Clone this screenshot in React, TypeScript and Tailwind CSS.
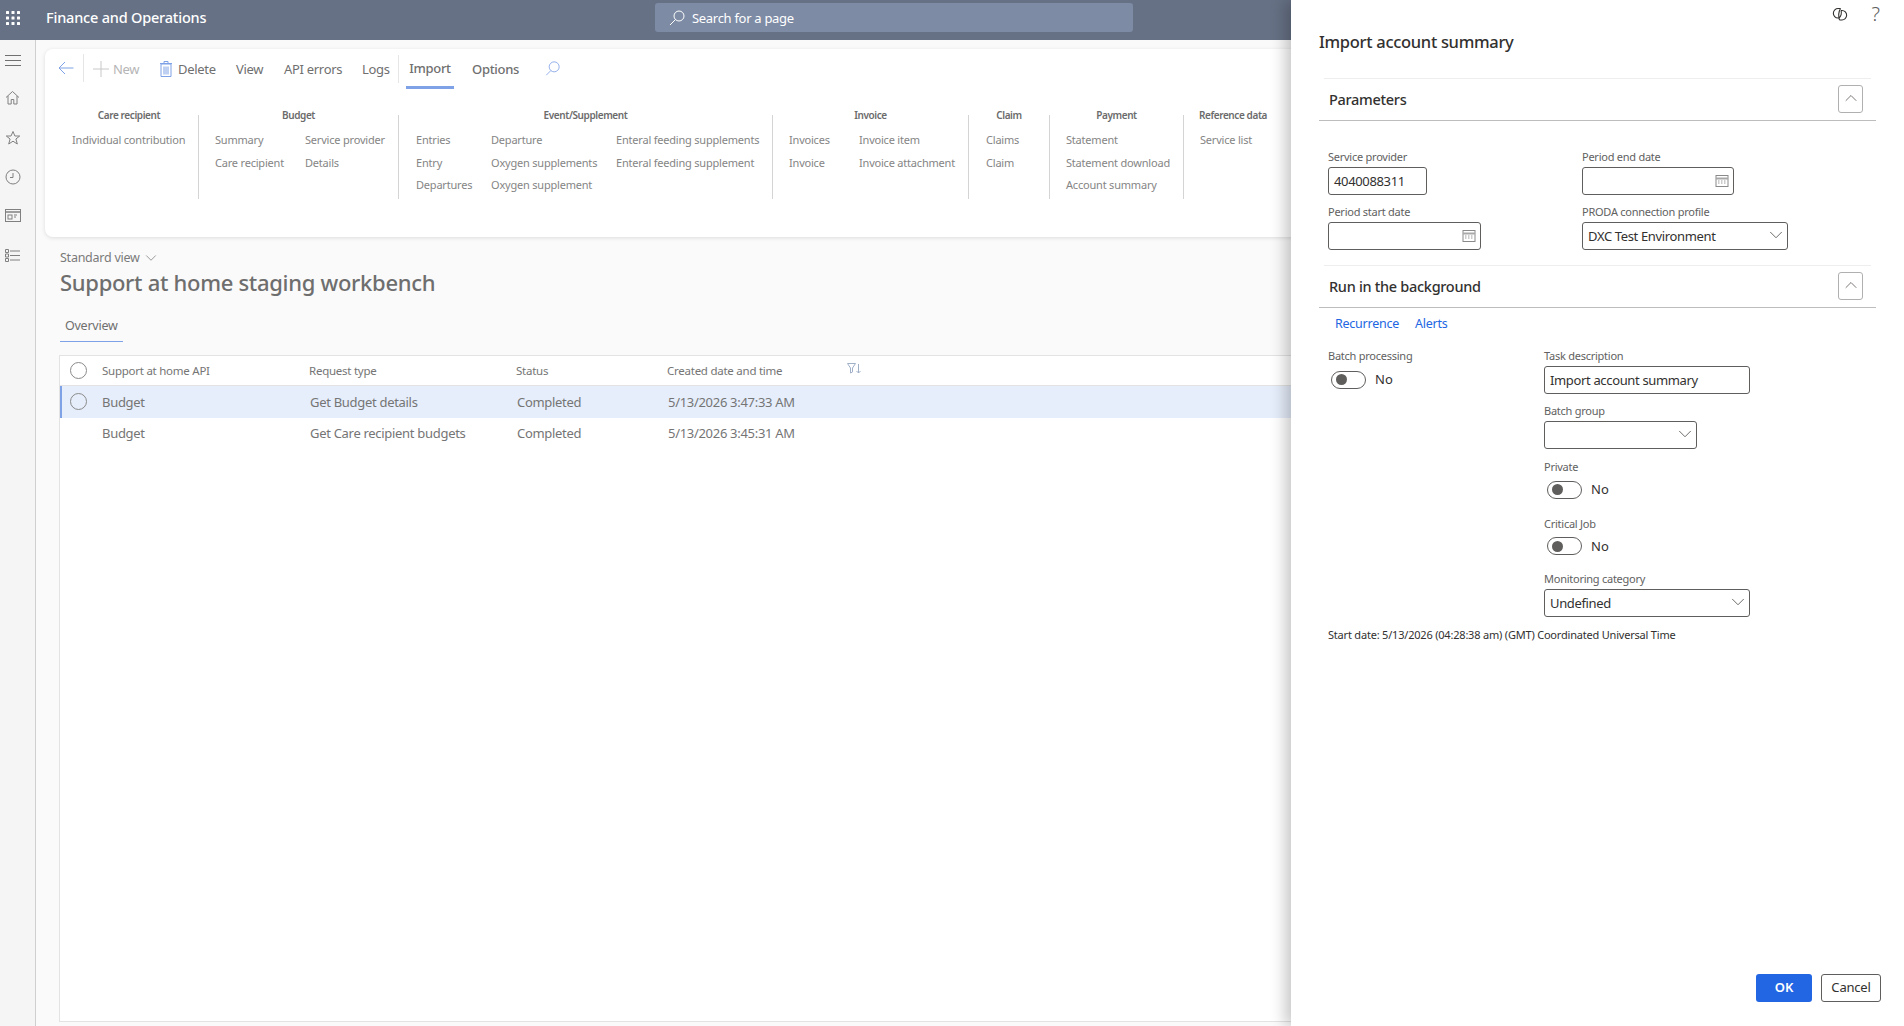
import { ChevronDown, ChevronUp } from 'lucide-react';

const groups = [
  { title: 'Care recipient', width: 'w-[139px]', pad: 'pl-3', columns: [{ w: 'w-[120px]', items: ['Individual contribution'] }] },
  {
    title: 'Budget',
    width: 'w-[200px]',
    pad: 'pl-4',
    columns: [
      { w: 'w-[90px]', items: ['Summary', 'Care recipient'] },
      { w: 'w-[90px]', items: ['Service provider', 'Details'] },
    ],
  },
  {
    title: 'Event/Supplement',
    width: 'w-[374px]',
    pad: 'pl-[17px]',
    columns: [
      { w: 'w-[75px]', items: ['Entries', 'Entry', 'Departures'] },
      { w: 'w-[125px]', items: ['Departure', 'Oxygen supplements', 'Oxygen supplement'] },
      { w: 'w-[150px]', items: ['Enteral feeding supplements', 'Enteral feeding supplement'] },
    ],
  },
  {
    title: 'Invoice',
    width: 'w-[196px]',
    pad: 'pl-4',
    columns: [
      { w: 'w-[70px]', items: ['Invoices', 'Invoice'] },
      { w: 'w-[100px]', items: ['Invoice item', 'Invoice attachment'] },
    ],
  },
  { title: 'Claim', width: 'w-[81px]', pad: 'pl-[17px]', columns: [{ w: 'w-[50px]', items: ['Claims', 'Claim'] }] },
  { title: 'Payment', width: 'w-[134px]', pad: 'pl-4', columns: [{ w: 'w-[110px]', items: ['Statement', 'Statement download', 'Account summary'] }] },
  { title: 'Reference data', width: 'w-[98px]', pad: 'pl-4', columns: [{ w: 'w-[70px]', items: ['Service list'] }], last: true },
];

const rows = [
  { api: 'Budget', type: 'Get Budget details', status: 'Completed', date: '5/13/2026 3:47:33 AM', selected: true },
  { api: 'Budget', type: 'Get Care recipient budgets', status: 'Completed', date: '5/13/2026 3:45:31 AM', selected: false },
];

function CalendarIcon() {
  return (
    <svg className="-mr-px" width="14" height="14" viewBox="0 0 14 14" fill="none" stroke="#8a8a8a" strokeWidth="1">
      <rect x="1" y="1.5" width="12" height="11" />
      <path d="M1 4.5h12" strokeWidth="2" stroke="#a8a8a8" />
      <path d="M3 7h1.5M6 7h1.5M9 7h1.5M3 9h1.5M6 9h1.5M9 9h1.5" stroke="#9a9a9a" />
    </svg>
  );
}

function SelectChevron() {
  return <ChevronDown size={22} strokeWidth={1} className="text-[#605e5c] -mr-[5px] -mt-[2px]" />;
}

function Field({ label, children, className }: { label: string; children?: React.ReactNode; className: string }) {
  return (
    <div>
      <div className="text-[11px] leading-[16px] text-[#616161] tracking-[-0.25px] mb-[2px]">{label}</div>
      <div className={`h-[28px] flex items-center justify-between pl-[5px] pr-[5px] border border-[#605e5c] rounded-[3px] text-[13px] text-[#323130] tracking-[-0.35px] ${className}`}>
        {children}
      </div>
    </div>
  );
}

function Toggle({ label, className }: { label?: string; className?: string }) {
  return (
    <div className={className}>
      {label && <div className="text-[11px] leading-[16px] text-[#616161] tracking-[-0.25px] mb-[5px]">{label}</div>}
      <div className="flex items-center gap-[9px]">
        <div className="w-[35px] h-[18px] ml-[3px] rounded-full border border-[#605e5c] flex items-center pl-[4px]">
          <div className="w-[11px] h-[11px] rounded-full bg-[#605e5c]" />
        </div>
        <span className="text-[13px] text-[#323130]">No</span>
      </div>
    </div>
  );
}

function SectionHeader({ title }: { title: string }) {
  return (
    <div className="mx-[28px] border-b border-[#bdbdbd] h-[42px] flex items-center justify-between pl-[10px] pr-[13px]">
      <span className="text-[14.5px] font-medium text-[#323130] tracking-[-0.3px] pt-px">{title}</span>
      <button className="w-[25px] h-[28px] -mt-[2px] border border-[#b0b0b0] rounded-[3px] flex items-center justify-center">
        <ChevronUp size={20} strokeWidth={1} className="text-[#605e5c] -mt-[2px]" />
      </button>
    </div>
  );
}

export default function App() {
  return (
    <div className="relative w-[1904px] h-[1026px] overflow-hidden bg-[#fafafa] font-['Noto_Sans',sans-serif]">
      <header className="h-10 bg-[#667185] flex items-center pb-[5px] text-white">
        <svg className="ml-[5px]" width="16" height="16" viewBox="0 0 16 16" fill="#fff">
          {[1, 6.5, 12].map((x) =>
            [1, 6.5, 12].map((y) => <rect key={`${x}-${y}`} x={x} y={y} width="3" height="3" rx="0.5" />),
          )}
        </svg>
        <span className="ml-[25px] w-[609px] text-[14.5px] font-medium tracking-[-0.2px]">Finance and Operations</span>
        <div className="w-[478px] h-[29px] rounded-[3px] bg-[#7d8ba5] flex items-center pl-[13px] gap-[6px]">
          <svg width="18" height="18" viewBox="0 0 18 18" fill="none" stroke="#fff" strokeWidth="1">
            <circle cx="11" cy="7" r="5" />
            <path d="M7.5 10.5 2 16" />
          </svg>
          <span className="text-[13px] tracking-[-0.3px] pt-[2px]">Search for a page</span>
        </div>
      </header>

      <div className="flex h-[986px]">
        <nav className="w-9 shrink-0 bg-[#f5f5f5] border-r border-[#cfcfcf] flex flex-col pr-[10px] [&>div]:h-[39px] [&>div]:flex [&>div]:items-center [&>div]:justify-center">
          <div>
            <svg width="16" height="14" viewBox="0 0 16 14" stroke="#707070" strokeWidth="1">
              <path d="M0 2.5h16M0 7.5h16M0 12.5h16" />
            </svg>
          </div>
          <div>
            <svg className="-mt-[2px]" width="15" height="15" viewBox="0 0 15 15" fill="none" stroke="#808080" strokeWidth="1">
              <path d="M1 7.5 7.5 1.5 14 7.5M3 6v8h3.2V9.5h2.6V14H12V6" />
            </svg>
          </div>
          <div>
            <svg width="16" height="16" viewBox="0 0 16 16" fill="none" stroke="#808080" strokeWidth="1">
              <path d="M8 1.5 9.9 6h4.8l-3.8 3 1.4 5L8 11.2 3.7 14l1.4-5-3.8-3H6z" />
            </svg>
          </div>
          <div>
            <svg width="16" height="16" viewBox="0 0 16 16" fill="none" stroke="#808080" strokeWidth="1">
              <circle cx="8" cy="8" r="7" />
              <path d="M8 4v4.5H5" />
            </svg>
          </div>
          <div>
            <svg width="16" height="13" viewBox="0 0 16 13" fill="none" stroke="#808080" strokeWidth="1">
              <rect x="0.5" y="0.5" width="15" height="12" />
              <path d="M0.5 3h15" strokeWidth="1.5" />
              <rect x="3" y="6" width="4" height="4" />
              <path d="M9 6h3M9 8h2" />
            </svg>
          </div>
          <div>
            <svg className="mt-px" width="15" height="13" viewBox="0 0 15 13" fill="none" stroke="#808080" strokeWidth="1">
              <path d="M0.5 0.5h3v3h-3zM0.5 5h3v3h-3zM0.5 9.5h3v3h-3zM5 2h10M5 6.5h10M5 11h10" />
            </svg>
          </div>
        </nav>

        <main className="flex-1 min-w-0">
          <section className="ml-[9px] mt-[9px] w-[1300px] h-[188px] bg-white rounded-[8px] shadow-[0_1px_4px_rgba(0,0,0,0.12)] pt-[3px]">
            <div className="flex items-center h-[34px] text-[13px] text-[#6f6f6f] tracking-[-0.3px]">
              <svg className="ml-[13px] -mt-[3px]" width="16" height="14" viewBox="0 0 16 14" fill="none" stroke="#7fa1e6" strokeWidth="1">
                <path d="M15.5 7H1M7 1 1 7l6 6" />
              </svg>
              <div className="ml-[9px] w-px h-[28px] -mt-[2px] bg-[#e6e6e6]" />
              <svg className="ml-[9px]" width="16" height="16" viewBox="0 0 16 16" stroke="#c8c8c8" strokeWidth="1">
                <path d="M8 0v16M0 8h16" />
              </svg>
              <span className="ml-[4px] w-[47px] text-[#b5b5b5] mt-[2px]">New</span>
              <svg width="12" height="16" viewBox="0 0 12 16" fill="none" stroke="#7fa1e6" strokeWidth="1">
                <path d="M1 3h10v12.5H1zM0 2.5h12M4 2.5V.5h4v2M4 5.5v8M6 5.5v8M8 5.5v8" />
              </svg>
              <span className="ml-[6px] w-[58px] mt-[2px]">Delete</span>
              <span className="w-[48px] mt-[2px]">View</span>
              <span className="w-[78px] mt-[2px]">API errors</span>
              <span className="w-[36px] mt-[2px]">Logs</span>
              <div className="w-px h-[28px] bg-[#e6e6e6]" />
              <div className="ml-[7px] w-[48px] h-[36px] -mb-[4px] pb-px flex items-center justify-center border-b-[3px] border-[#7fa1e6] font-medium">
                Import
              </div>
              <span className="ml-[18px] w-[73px] mt-[2px] font-medium">Options</span>
              <svg className="-mt-[2px]" width="15" height="15" viewBox="0 0 18 18" fill="none" stroke="#7fa1e6" strokeWidth="1">
                <circle cx="11" cy="7" r="6" />
                <path d="M7 11.5 1.5 17" />
              </svg>
            </div>

            <div className="flex ml-[15px] mt-[29px] h-[84px]">
              {groups.map((g) => (
                <div key={g.title} className={`${g.width} shrink-0 ${g.last ? '' : 'border-r border-[#d4d4d4]'}`}>
                  <div className="-mt-[7px] text-center text-[10px] leading-[14px] font-semibold text-[#6b6b6b] tracking-[-0.4px]">
                    {g.title}
                  </div>
                  <div className={`flex mt-[7px] ${g.pad}`}>
                    {g.columns.map((c, i) => (
                      <div key={i} className={`${c.w} shrink-0 text-[11px] leading-[22.5px] text-[#858585] whitespace-nowrap tracking-[-0.2px]`}>
                        {c.items.map((it) => (
                          <div key={it}>{it}</div>
                        ))}
                      </div>
                    ))}
                  </div>
                </div>
              ))}
            </div>
          </section>

          <div className="ml-[24px] mt-[12px]">
            <div className="flex items-center gap-[2px] text-[12.5px] leading-[18px] text-[#7a7a7a] tracking-[-0.25px]">
              Standard view
              <ChevronDown size={18} strokeWidth={1} />
            </div>
            <h1 className="-mt-[2px] text-[22px] leading-[34px] font-medium text-[#6e6e6e] tracking-[-0.3px]">
              Support at home staging workbench
            </h1>
            <div className="mt-[16px] w-[63px] h-[27px] border-b border-[#7fa1e6] pl-[5px] pt-px text-[12.5px] leading-[20px] text-[#6f6f6f] tracking-[-0.25px]">
              Overview
            </div>
          </div>

          <div className="ml-[23px] mt-[13px] w-[1301px] h-[667px] bg-white border border-[#e3e3e3]">
            <div className="flex items-center h-[30px] border-b border-[#e3e3e3] text-[11.5px] text-[#757575] tracking-[-0.25px]">
              <div className="w-[42px] pl-[10px] shrink-0">
                <div className="w-[17px] h-[17px] rounded-full border border-[#8a8a8a]" />
              </div>
              <div className="w-[207px] shrink-0 pt-px">Support at home API</div>
              <div className="w-[207px] shrink-0 pt-px">Request type</div>
              <div className="w-[151px] shrink-0 pt-px">Status</div>
              <div className="w-[180px] shrink-0 pt-px">Created date and time</div>
              <svg width="14" height="12" viewBox="0 0 14 12" fill="none" stroke="#9fb0c8" strokeWidth="1" className="-mt-[3px]">
                <path d="M.5.5h8L5.5 5v4L3.5 10V5zM11.5 1v9M9.5 8l2 2 2-2" />
              </svg>
            </div>
            {rows.map((r) => (
              <div
                key={r.date}
                className={`flex items-center h-[31.5px] text-[13px] text-[#757575] tracking-[-0.3px] ${
                  r.selected ? 'bg-[#e6eefb] border-l-[2px] border-[#7fa1e6]' : 'border-l-[2px] border-transparent'
                }`}
              >
                <div className="w-[40px] pl-[8px] shrink-0">
                  {r.selected && <div className="w-[17px] h-[17px] rounded-full border border-[#8a8a8a]" />}
                </div>
                <div className="w-[208px] shrink-0 pt-px">{r.api}</div>
                <div className="w-[207px] shrink-0 pt-px">{r.type}</div>
                <div className="w-[151px] shrink-0 pt-px">{r.status}</div>
                <div className="shrink-0 pt-px">{r.date}</div>
              </div>
            ))}
          </div>
        </main>
      </div>

      {/* side dialog sits over the page */}
      <aside className="absolute top-0 right-0 bottom-0 w-[613px] bg-white shadow-[-6px_0_14px_rgba(0,0,0,0.22)] flex flex-col">
        <div className="flex justify-end items-center gap-[24px] pr-[24px] h-[28px]">
          <svg width="16" height="16" viewBox="0 0 16 16" fill="none" stroke="#323130" strokeWidth="1.1">
            <path d="M8.5 2.5H6.2A4.7 4.7 0 0 0 6 12h1" />
            <path d="M7.5 14h2.3A4.7 4.7 0 0 0 10 4.5H9" />
            <path d="M8.5 2.5C7 5 6 9 7.5 14M9 4.5C10 7 9 10.5 7 12" />
          </svg>
          <span className="text-[20px] leading-none font-light text-[#605e5c]">?</span>
        </div>
        <h2 className="ml-[28px] mt-[2px] text-[16.5px] leading-[24px] font-medium text-[#323130] tracking-[-0.3px]">
          Import account summary
        </h2>

        <div className="mt-[24px] mx-[33px] border-t border-[#eeeeee]" />
        <SectionHeader title="Parameters" />

        <div className="ml-[37px] mt-[28px] grid grid-cols-[254px_1fr] gap-y-[9px]">
          <Field label="Service provider" className="w-[99px]"><span className="pt-px">4040088311</span></Field>
          <Field label="Period end date" className="w-[152px]">
            <span />
            <CalendarIcon />
          </Field>
          <Field label="Period start date" className="w-[153px]">
            <span />
            <CalendarIcon />
          </Field>
          <Field label="PRODA connection profile" className="w-[206px]">
            <span className="pt-[2px]">DXC Test Environment</span>
            <SelectChevron />
          </Field>
        </div>

        <div className="mt-[15px] mx-[33px] border-t border-[#eeeeee]" />
        <SectionHeader title="Run in the background" />

        <div className="ml-[44px] mt-[7px] flex gap-[16px] text-[12.5px] leading-[18px] text-[#2266e3] tracking-[-0.25px]">
          <span>Recurrence</span>
          <span>Alerts</span>
        </div>

        <div className="ml-[37px] mt-[15px] grid grid-cols-[216px_1fr]">
          <div>
            <div className="text-[11px] leading-[16px] text-[#616161] tracking-[-0.25px] mb-[6px]">Batch processing</div>
            <Toggle />
          </div>
          <div className="flex flex-col">
            <Field label="Task description" className="w-[206px]"><span className="pt-px">Import account summary</span></Field>
            <div className="mt-[9px]">
              <Field label="Batch group" className="w-[153px]">
                <span />
                <SelectChevron />
              </Field>
            </div>
            <Toggle label="Private" className="mt-[10px]" />
            <Toggle label="Critical Job" className="mt-[16px]" />
            <div className="mt-[15px]">
              <Field label="Monitoring category" className="w-[206px]">
                <span className="pt-[2px]">Undefined</span>
                <SelectChevron />
              </Field>
            </div>
          </div>
        </div>

        <div className="ml-[37px] mt-[10px] text-[11px] leading-[16px] text-[#323130] tracking-[-0.2px]">
          Start date: 5/13/2026 (04:28:38 am) (GMT) Coordinated Universal Time
        </div>

        <div className="mt-auto mb-[24px] mr-[23px] flex justify-end gap-[9px]">
          <button className="w-[56px] h-[28px] rounded-[3px] bg-[#2266e3] text-white text-[13px] font-semibold">OK</button>
          <button className="w-[60px] h-[28px] rounded-[3px] border border-[#605e5c] text-[#323130] text-[13px] tracking-[-0.2px]">Cancel</button>
        </div>
      </aside>
    </div>
  );
}
